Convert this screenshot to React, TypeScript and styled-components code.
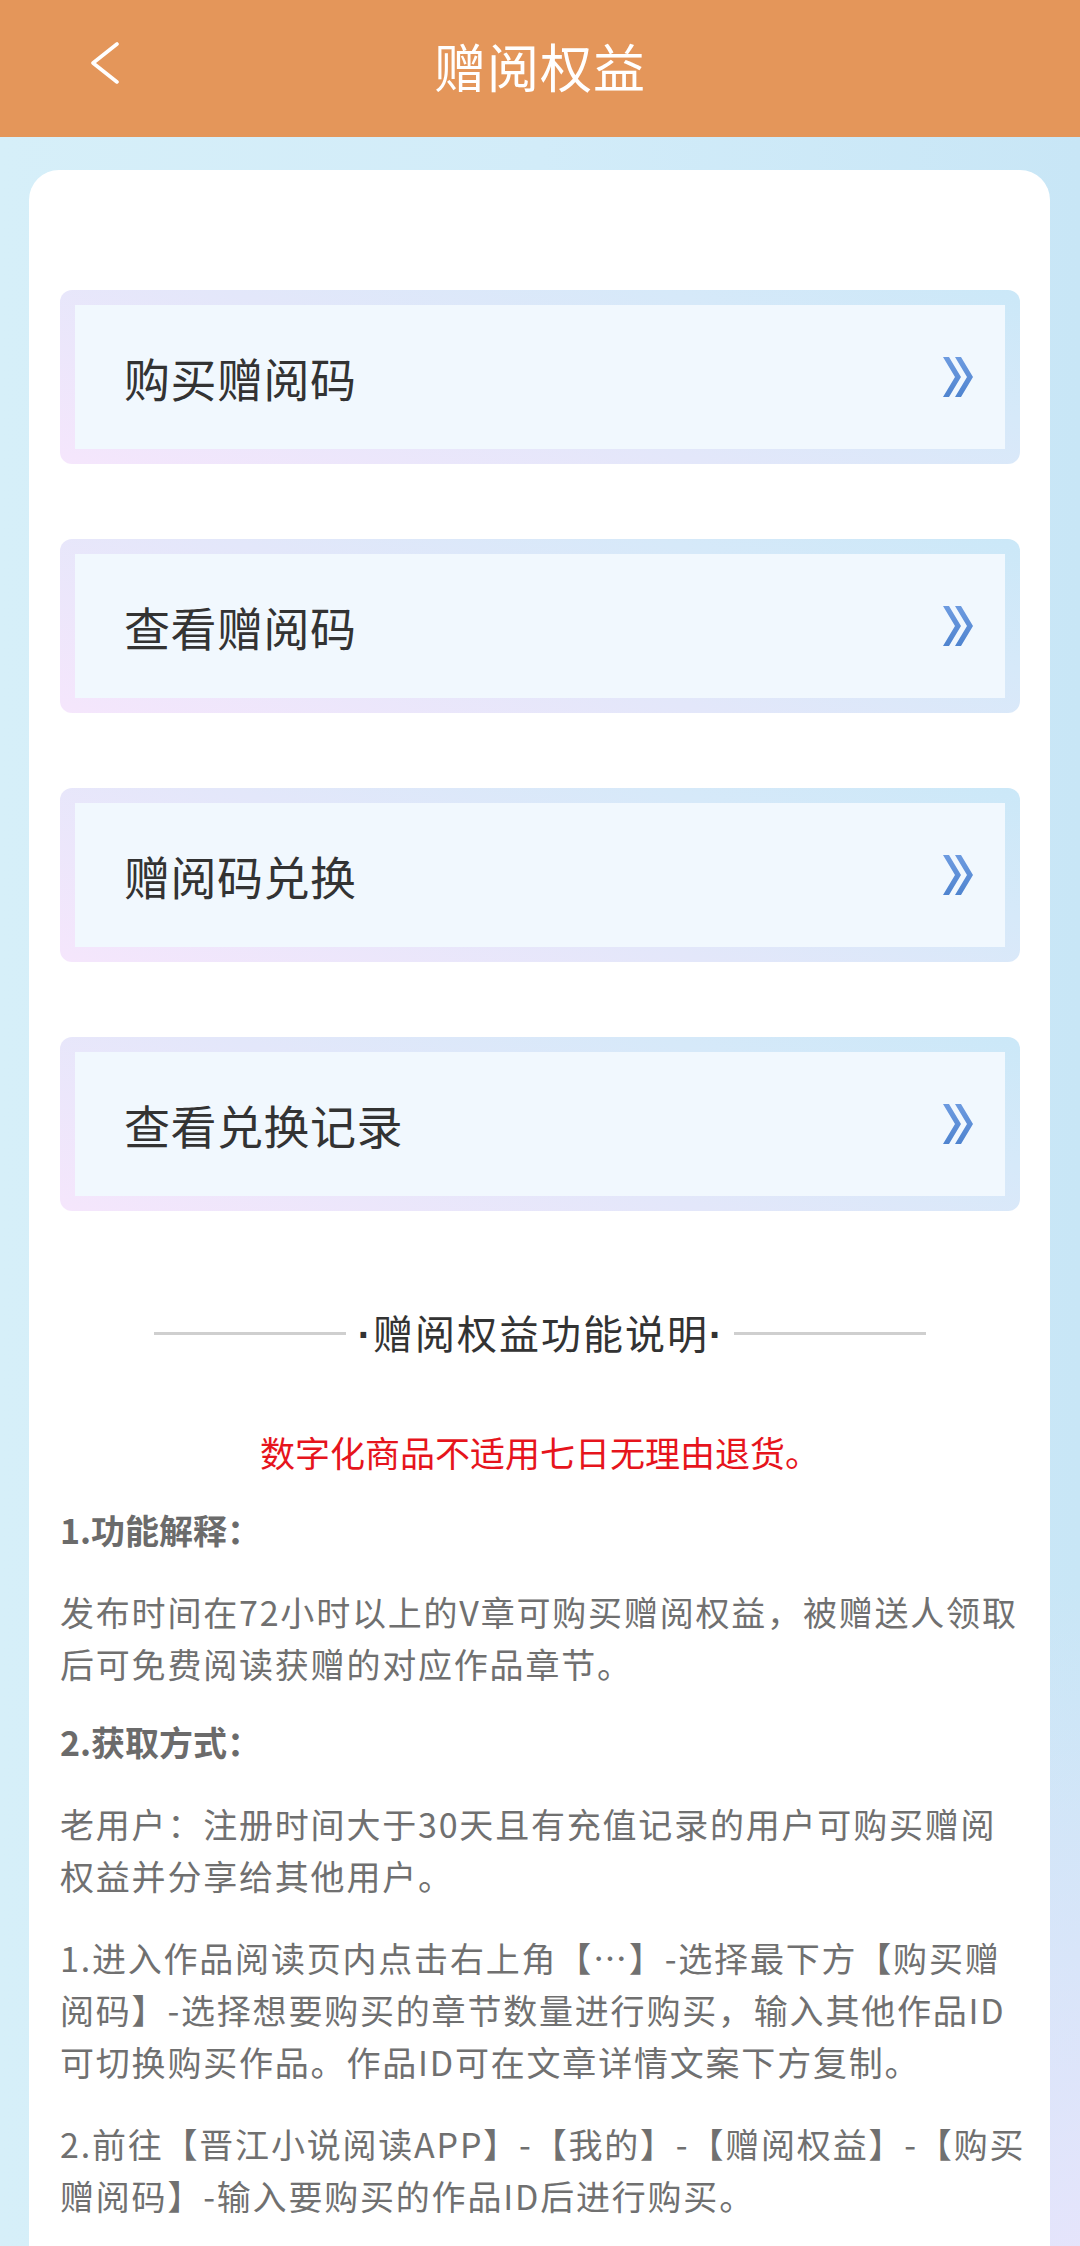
import styled, { createGlobalStyle } from 'styled-components';

const GlobalStyle = createGlobalStyle`
  html, body {
    margin: 0;
    padding: 0;
  }
  body {
    font-family: "Noto Sans CJK SC", "Noto Sans", sans-serif;
    background: linear-gradient(90deg, #d6eff9 0%, #d2ecf9 50%, #c8e6f6 100%);
    min-height: 2246px;
  }
`;

const Page = styled.div`
  min-height: 2246px;
  display: flex;
  flex-direction: column;
  background:
    radial-gradient(ellipse 420px 700px at 100% 100%, rgba(232, 228, 252, 0.95) 0%, rgba(232, 228, 252, 0) 100%),
    linear-gradient(90deg, #d6eff9 0%, #d2ecf9 50%, #c8e6f6 100%);
`;

const Header = styled.header`
  height: 137px;
  background: #e4965a;
  display: grid;
  grid-template-columns: 1fr auto 1fr;
  align-items: center;
  padding: 0 90px;
`;

const BackButton = styled.button`
  border: none;
  background: none;
  padding: 0;
  width: 30px;
  height: 42px;
  display: flex;
  align-items: center;
  justify-self: start;
  margin-top: -12px;
  cursor: pointer;
`;

const Title = styled.h1`
  margin: 0 0 6px;
  color: #ffffff;
  font-size: 52px;
  font-weight: 400;
  letter-spacing: 1px;
`;

const Body = styled.main`
  flex: 1;
  display: flex;
  padding: 33px 30px 0 29px;
`;

const Card = styled.section`
  flex: 1;
  background: #ffffff;
  border-radius: 30px 30px 0 0;
  padding: 120px 30px 60px 31px;
  display: flex;
  flex-direction: column;
`;

const MenuList = styled.div`
  display: flex;
  flex-direction: column;
  gap: 75px;
`;

const MenuFrame = styled.div`
  height: 174px;
  box-sizing: border-box;
  padding: 15px;
  border-radius: 12px;
  background: linear-gradient(20deg, #f5e6fc 0%, #e3e7fa 45%, #d6e9f9 75%, #cbe8f8 100%);
`;

const MenuInner = styled.div`
  height: 100%;
  background: #f1f8fe;
  display: flex;
  align-items: center;
  justify-content: space-between;
  padding: 0 31px 0 49px;
`;

const MenuLabel = styled.span`
  font-size: 46px;
  color: #333333;
  letter-spacing: 0.5px;
`;

const SectionTitle = styled.div`
  margin-top: 93px;
  display: flex;
  align-items: center;
  justify-content: center;
  gap: 12px;
`;

const Rule = styled.span`
  width: 192px;
  height: 3px;
  background: #cfcfcf;
`;

const SectionText = styled.span`
  font-size: 40px;
  line-height: 56px;
  color: #333333;
  letter-spacing: 2px;
  margin-right: -2px;
`;

const Dot = styled.span`
  font-family: "Liberation Sans", Arial, sans-serif;
  font-weight: 700;
`;

const Notice = styled.p`
  margin: 63px 0 0;
  text-align: center;
  color: #e6141c;
  font-size: 35px;
  line-height: 52px;
`;

const Heading = styled.h3`
  margin: 26px 0 0;
  color: #6b6b6b;
  font-size: 34px;
  line-height: 52px;
  font-weight: 700;
`;

const Para = styled.p`
  margin: 30px -12px 0 0;
  color: #707070;
  font-size: 34px;
  line-height: 52px;
  letter-spacing: 1.8px;
`;

const BackIcon = () => (
  <svg width="30" height="42" viewBox="0 0 30 42">
    <polyline points="27,2 3,21 27,40" fill="none" stroke="#ffffff" strokeWidth="3.6" strokeLinecap="round" strokeLinejoin="round" />
  </svg>
);

const DoubleChevron = () => (
  <svg width="31" height="40" viewBox="0 0 31 40">
    <defs>
      <linearGradient id="chev" x1="0" y1="0" x2="0" y2="1">
        <stop offset="0" stopColor="#6d9be0" />
        <stop offset="1" stopColor="#4f84cf" />
      </linearGradient>
    </defs>
    <polygon points="0,0 6,0 18,20 6,40 0,40 12,20" fill="url(#chev)" />
    <polygon points="12,0 18,0 30,20 18,40 12,40 24,20" fill="url(#chev)" />
  </svg>
);

const menuItems = ['购买赠阅码', '查看赠阅码', '赠阅码兑换', '查看兑换记录'];

export default function App() {
  return (
    <>
      <GlobalStyle />
      <Page>
        <Header>
          <BackButton aria-label="返回">
            <BackIcon />
          </BackButton>
          <Title>赠阅权益</Title>
          <span />
        </Header>
        <Body>
          <Card>
            <MenuList>
              {menuItems.map((item) => (
                <MenuFrame key={item}>
                  <MenuInner>
                    <MenuLabel>{item}</MenuLabel>
                    <DoubleChevron />
                  </MenuInner>
                </MenuFrame>
              ))}
            </MenuList>

            <SectionTitle>
              <Rule />
              <SectionText>
                <Dot>·</Dot>赠阅权益功能说明<Dot>·</Dot>
              </SectionText>
              <Rule />
            </SectionTitle>

            <Notice>数字化商品不适用七日无理由退货。</Notice>

            <Heading>1.功能解释：</Heading>
            <Para>
              发布时间在72小时以上的V章可购买赠阅权益，被赠送人领取
              <br />
              后可免费阅读获赠的对应作品章节。
            </Para>

            <Heading>2.获取方式：</Heading>
            <Para>
              老用户：注册时间大于30天且有充值记录的用户可购买赠阅
              <br />
              权益并分享给其他用户。
            </Para>
            <Para>
              1.进入作品阅读页内点击右上角【…】-选择最下方【购买赠
              <br />
              阅码】-选择想要购买的章节数量进行购买，输入其他作品ID
              <br />
              可切换购买作品。作品ID可在文章详情文案下方复制。
            </Para>
            <Para>
              2.前往【晋江小说阅读APP】-【我的】-【赠阅权益】-【购买
              <br />
              赠阅码】-输入要购买的作品ID后进行购买。
            </Para>
          </Card>
        </Body>
      </Page>
    </>
  );
}
